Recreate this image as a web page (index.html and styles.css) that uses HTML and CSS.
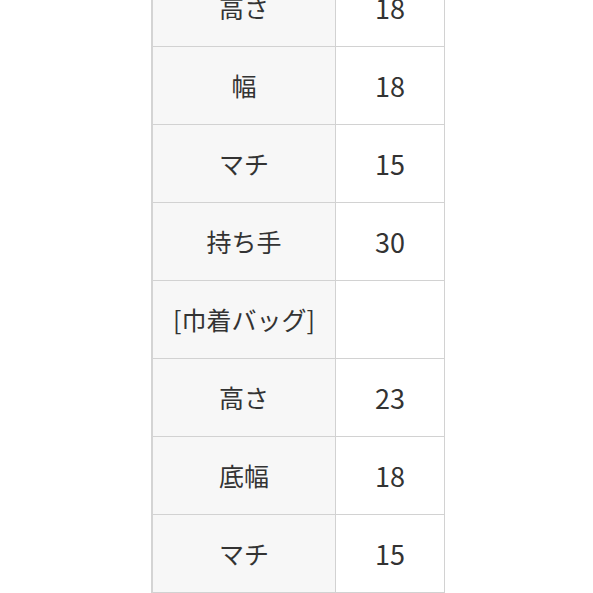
FILE: index.html
```html
<!DOCTYPE html>
<html lang="ja">
<head>
<meta charset="utf-8">
<link rel="stylesheet" href="styles.css">
</head>
<body>
<div class="wrap">
<table class="spec">
<tr><th>高さ</th><td>18</td></tr>
<tr><th>幅</th><td>18</td></tr>
<tr><th>マチ</th><td>15</td></tr>
<tr><th>持ち手</th><td>30</td></tr>
<tr><th>[巾着バッグ]</th><td></td></tr>
<tr><th>高さ</th><td>23</td></tr>
<tr><th>底幅</th><td>18</td></tr>
<tr><th>マチ</th><td>15</td></tr>
<tr><th>&nbsp;</th><td></td></tr>
</table>
</div>
</body>
</html>
```
FILE: styles.css
```css
html, body {
  margin: 0;
  padding: 0;
  background: #ffffff;
}
.wrap {
  margin-top: -31px;
  padding-left: 151px;
}
.spec {
  border-collapse: collapse;
  font-family: "Noto Sans CJK JP", "Noto Sans", sans-serif;
  font-size: 25px;
  color: #333333;
  border-left: 2px solid #d4d4d4;
}
.spec th,
.spec td {
  height: 77px;
  padding: 0;
  border: 1px solid #d2d2d2;
  text-align: center;
  vertical-align: middle;
  font-weight: normal;
  line-height: 1;
}
.spec th {
  width: 182px;
  background: #f7f7f7;
}
.spec td {
  width: 108px;
  background: #ffffff;
  font-size: 27px;
}
.spec tr:first-child th,
.spec tr:first-child td {
  border-top: none;
}
```
